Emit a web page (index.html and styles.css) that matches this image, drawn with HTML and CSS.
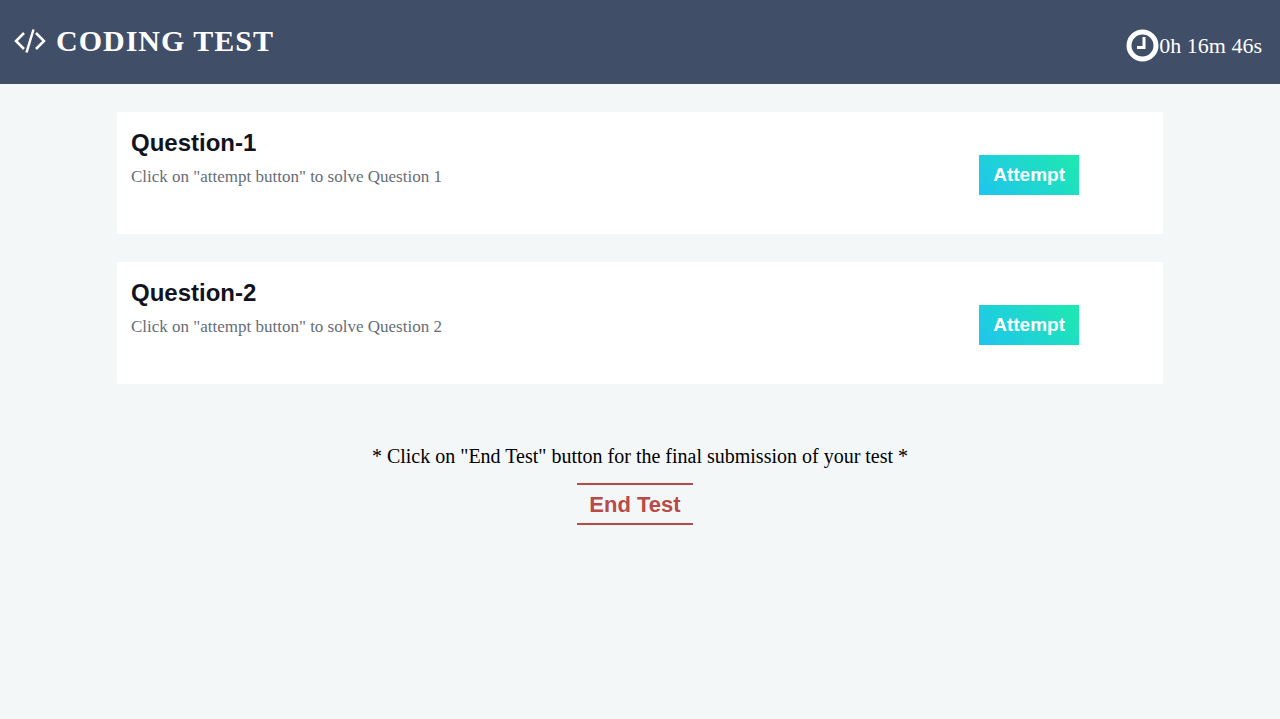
FILE: index.html
```html
<!DOCTYPE html>
<html lang="en">
<head>
<meta charset="utf-8">
<title>Coding Test</title>
<link rel="stylesheet" href="styles.css">
</head>
<body>
<header class="topbar">
  <h1 class="brand">
    <svg class="brand-icon" viewBox="0 0 32 26" aria-hidden="true"><path d="M10 5 2 13 10 21M22 5l8 8L22 21M19.500 1.500l-7 23"/></svg>
    <span>CODING TEST</span>
  </h1>
  <div class="timer">
    <svg class="clock" viewBox="0 0 33 33" aria-hidden="true"><circle cx="16.500" cy="16.500" r="13.500"/><path d="M18 8v10.500H11"/></svg>
    <span>0h 16m 46s</span>
  </div>
</header>
<main class="content">
  <section class="card">
    <div>
      <h2 class="card-title">Question-1</h2>
      <p class="card-text">Click on "attempt button" to solve Question 1</p>
    </div>
    <button class="attempt" type="button">Attempt</button>
  </section>
  <section class="card">
    <div>
      <h2 class="card-title">Question-2</h2>
      <p class="card-text">Click on "attempt button" to solve Question 2</p>
    </div>
    <button class="attempt" type="button">Attempt</button>
  </section>
  <div class="finish">
    <p class="note">* Click on "End Test" button for the final submission of your test *</p>
    <button class="end" type="button">End Test</button>
  </div>
</main>
</body>
</html>
```
FILE: styles.css
```css
* { box-sizing: border-box; }
body {
  margin: 0;
  background: #f3f7f8;
  font-family: "Liberation Serif", "Times New Roman", serif;
}
h1, h2, p { margin: 0; }
.topbar {
  display: flex;
  justify-content: space-between;
  align-items: flex-start;
  min-height: 84px;
  padding: 22px 18px 16px 14px;
  background: #404e67;
  color: #fff;
}
.brand {
  display: flex;
  align-items: center;
  gap: 10px;
  font-size: 30px;
  line-height: 38px;
  letter-spacing: 1px;
}
.brand-icon {
  width: 32px;
  height: 26px;
  fill: none;
  stroke: #fff;
  stroke-width: 2.5;
}
.timer {
  display: flex;
  align-items: center;
  padding-top: 7px;
  font-size: 22px;
  line-height: 32px;
}
.clock {
  width: 33px;
  height: 33px;
  fill: none;
  stroke: #fff;
  stroke-width: 5;
}
.clock path { stroke-width: 3; }
.content {
  display: flex;
  flex-direction: column;
  gap: 28px;
  padding: 28px 117px;
}
.card {
  display: flex;
  justify-content: space-between;
  align-items: flex-start;
  min-height: 122px;
  padding: 16px 84px 16px 14px;
  border-radius: 2px;
  background: #fff;
}
.card-title {
  color: #111420;
  font: bold 24px/30px "Liberation Sans", Arial, sans-serif;
}
.card-text {
  margin-top: 9px;
  color: #666d77;
  font-size: 17px;
  line-height: 20px;
}
.attempt {
  margin-top: 27px;
  padding: 8px 14px;
  border: 0;
  background: linear-gradient(45deg, #1fc4ef, #1eeaae);
  color: #fff;
  font: bold 19px/24px "Liberation Sans", Arial, sans-serif;
}
.finish {
  display: flex;
  flex-direction: column;
  align-items: center;
  gap: 14px;
  padding-top: 32px;
}
.note { font-size: 20px; line-height: 25px; }
.end {
  margin-right: 10px;
  padding: 7px 12px 5px;
  border: solid #b94a48;
  border-width: 2px 0;
  background: none;
  color: #b94a48;
  font: bold 22px/26px "Liberation Sans", Arial, sans-serif;
}
```
